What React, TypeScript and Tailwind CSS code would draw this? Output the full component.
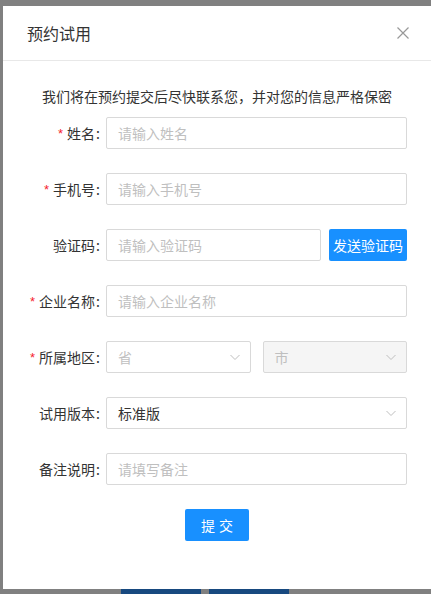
import React from "react";

const font = { fontFamily: '"Noto Sans CJK SC", "Liberation Sans", sans-serif' };

function Chevron() {
  return (
    <svg width="12" height="12" viewBox="0 0 12 12" fill="none" className="shrink-0">
      <path d="M1.5 4 L6 8.5 L10.5 4" stroke="#bfbfbf" strokeWidth="1" />
    </svg>
  );
}

function Label({ text, required }: { text: string; required?: boolean }) {
  return (
    <div className="w-[103px] shrink-0 flex items-center justify-end pr-[6px] text-[14px] text-[#333]">
      {required && <span className="text-[#f5222d] mr-[4px] text-[13px] leading-none" style={{ fontFamily: '"Liberation Sans", sans-serif' }}>*</span>}
      <span>{text}</span>
      <span className="ml-[1px]">:</span>
    </div>
  );
}

function Input({ placeholder, className = "" }: { placeholder: string; className?: string }) {
  return (
    <div className={`h-[32px] border border-[#d9d9d9] rounded-[2px] bg-white flex items-center px-[11px] text-[14px] text-[#bfbfbf] ${className}`}>
      {placeholder}
    </div>
  );
}

export default function App() {
  return (
    <div className="relative w-[431px] h-[594px] overflow-hidden bg-[#808080]" style={font}>
      <div className="pt-[6px] pl-[3px]">
        <div className="w-[428px] h-[583px] bg-white flex flex-col">
          <div className="h-[55px] border-b border-[#e8e8e8] flex items-center justify-between pl-[24px] pr-[22px] shrink-0">
            <span className="text-[16px] text-[#333]">预约试用</span>
            <svg width="12" height="12" viewBox="0 0 12 12">
              <path d="M0.5 0.5 L11.5 11.5 M11.5 0.5 L0.5 11.5" stroke="#999" strokeWidth="1.2" />
            </svg>
          </div>
          <div className="pt-[24px] pr-[24px] flex flex-col">
            <div className="text-[14px] leading-[22px] text-[#333] text-center pl-[24px] mb-[10px]">
              我们将在预约提交后尽快联系您，并对您的信息严格保密
            </div>
            <div className="flex flex-col gap-[24px]">
              <div className="flex">
                <Label text="姓名" required />
                <Input placeholder="请输入姓名" className="flex-1" />
              </div>
              <div className="flex">
                <Label text="手机号" required />
                <Input placeholder="请输入手机号" className="flex-1" />
              </div>
              <div className="flex">
                <Label text="验证码" />
                <Input placeholder="请输入验证码" className="w-[215px]" />
                <div className="ml-[8px] flex-1 h-[32px] bg-[#1890ff] rounded-[2px] flex items-center justify-center text-white text-[14px]">
                  发送验证码
                </div>
              </div>
              <div className="flex">
                <Label text="企业名称" required />
                <Input placeholder="请输入企业名称" className="flex-1" />
              </div>
              <div className="flex">
                <Label text="所属地区" required />
                <div className="flex-1 flex gap-[12px]">
                  <div className="flex-1 h-[32px] border border-[#d9d9d9] rounded-[2px] bg-white flex items-center justify-between pl-[11px] pr-[9px] text-[14px] text-[#bfbfbf]">
                    <span>省</span>
                    <Chevron />
                  </div>
                  <div className="flex-1 h-[32px] border border-[#d9d9d9] rounded-[2px] bg-[#f5f5f5] flex items-center justify-between pl-[11px] pr-[9px] text-[14px] text-[#bfbfbf]">
                    <span>市</span>
                    <Chevron />
                  </div>
                </div>
              </div>
              <div className="flex">
                <Label text="试用版本" />
                <div className="flex-1 h-[32px] border border-[#d9d9d9] rounded-[2px] bg-white flex items-center justify-between pl-[11px] pr-[9px] text-[14px] text-[#333]">
                  <span>标准版</span>
                  <Chevron />
                </div>
              </div>
              <div className="flex">
                <Label text="备注说明" />
                <Input placeholder="请填写备注" className="flex-1" />
              </div>
            </div>
            <div className="flex justify-center pl-[24px] mt-[24px]">
              <div className="w-[64px] h-[32px] bg-[#1890ff] rounded-[2px] flex items-center justify-center text-white text-[14px] tracking-[4px] pl-[4px]">
                提交
              </div>
            </div>
          </div>
        </div>
      </div>
      <div className="absolute top-[589px] left-[121px] flex gap-[8px]">
        <div className="w-[80px] h-[20px] bg-[#17497f]" />
        <div className="w-[80px] h-[20px] bg-[#17497f]" />
      </div>
    </div>
  );
}
